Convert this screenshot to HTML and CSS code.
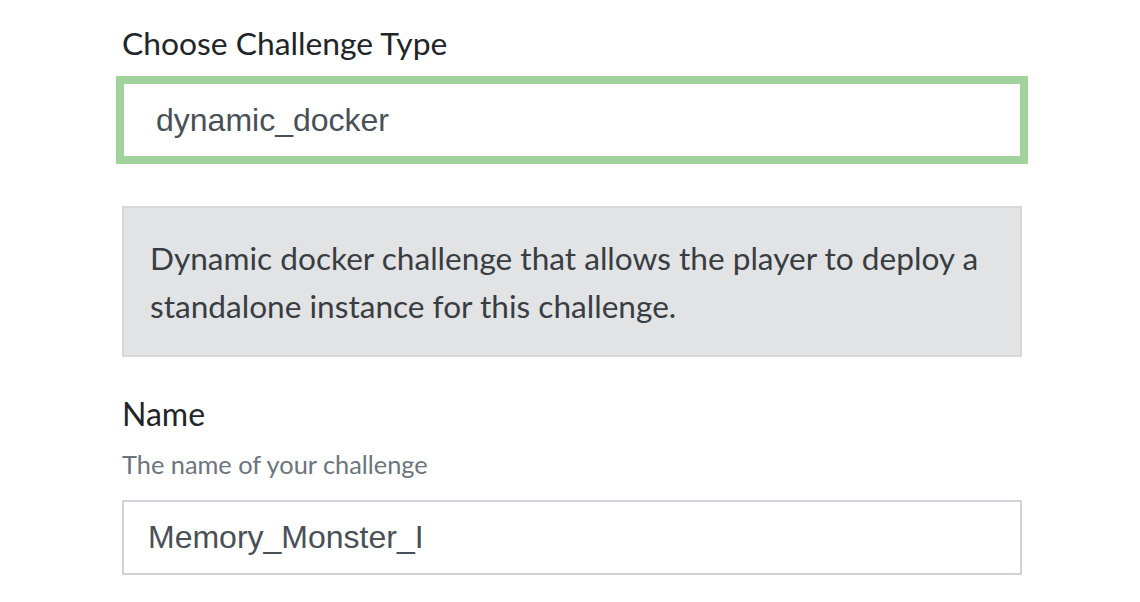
FILE: index.html
```html
<!DOCTYPE html>
<html lang="en">
<head>
<meta charset="utf-8">
<title>Create Challenge</title>
<link rel="stylesheet" href="styles.css">
</head>
<body>
<form class="page">
  <div class="form-group">
    <label class="label label-type">Choose Challenge Type</label>
    <div class="input input-focus">dynamic_docker</div>
  </div>
  <div class="alert">Dynamic docker challenge that allows the player to deploy a standalone instance for this challenge.</div>
  <div class="form-group">
    <label class="label label-name">Name</label>
    <small class="help">The name of your challenge</small>
    <div class="input input-name">Memory_Monster_I</div>
  </div>
</form>
</body>
</html>
```

FILE: styles.css
```css
html, body {
  margin: 0;
  padding: 0;
  background: #ffffff;
}

.page {
  width: 900px;
  padding: 19px 0 0 122px;
  font-family: Lato, "Liberation Sans", sans-serif;
}

.form-group {
  display: flex;
  flex-direction: column;
}

.label {
  display: block;
  font-size: 32px;
  line-height: 48px;
  color: #212529;
}

.label-type {
  font-size: 31.8px;
  margin-bottom: 15px;
}

.input {
  box-sizing: border-box;
  display: flex;
  align-items: center;
  width: 900px;
  font-family: "Liberation Sans", Arial, sans-serif;
  font-size: 32px;
  color: #495057;
  background: #ffffff;
  border: 2px solid #ced4da;
}

.input-focus {
  height: 76px;
  padding-left: 32px;
  border-color: #a2d39c;
  box-shadow: 0 0 0 6px #a2d39c;
}

.alert {
  box-sizing: border-box;
  width: 900px;
  margin-top: 48px;
  padding: 26px 24px 25px 26px;
  background: #e2e3e5;
  border: 2px solid #d6d8db;
  color: #383d41;
  font-size: 31.6px;
  line-height: 48px;
}

.label-name {
  margin-top: 33px;
  margin-bottom: 8px;
}

.help {
  display: block;
  font-size: 25.35px;
  line-height: 36px;
  color: #6c757d;
  margin-bottom: 18px;
}

.input-name {
  height: 75px;
  padding-left: 24px;
}
```
